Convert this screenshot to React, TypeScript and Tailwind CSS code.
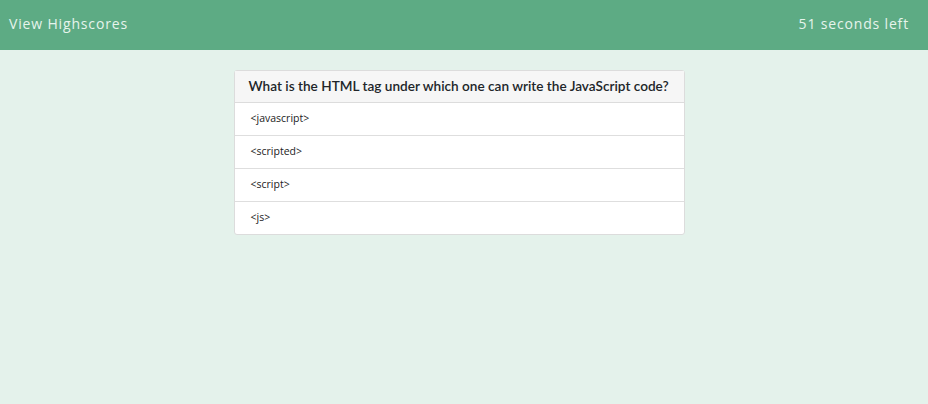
const options = ["<javascript>", "<scripted>", "<script>", "<js>"];

export default function App() {
  return (
    <div className="min-h-[404px] bg-[#e4f2eb] font-['Open_Sans',sans-serif]">
      <header className="h-[50px] bg-[#5dab84] flex items-center justify-between pl-[9px] pr-[19px] pb-[3px] text-[#e6f4ec] text-[14px] tracking-[0.06em]">
        <span>View Highscores</span>
        <span>51 seconds left</span>
      </header>
      <main className="flex justify-center pt-5 pr-[10px]">
        <div className="w-[451px] bg-white border border-[#dcdcdc] rounded-[3px]">
          <div className="h-[32px] bg-[#f6f6f6] border-b border-[#dcdcdc] flex items-center px-[14px] text-[13.6px] font-semibold text-[#212529] whitespace-nowrap font-['Lato',sans-serif]">
            What is the HTML tag under which one can write the JavaScript code?
          </div>
          {options.map((o, i) => (
            <div
              key={o}
              className={
                "flex items-center pl-[16px] pr-[15px] text-[10.5px] text-[#222] " +
                (i < options.length - 1 ? "h-[33px] border-b border-[#dedede]" : "h-[32px]")
              }
            >
              {o}
            </div>
          ))}
        </div>
      </main>
    </div>
  );
}
